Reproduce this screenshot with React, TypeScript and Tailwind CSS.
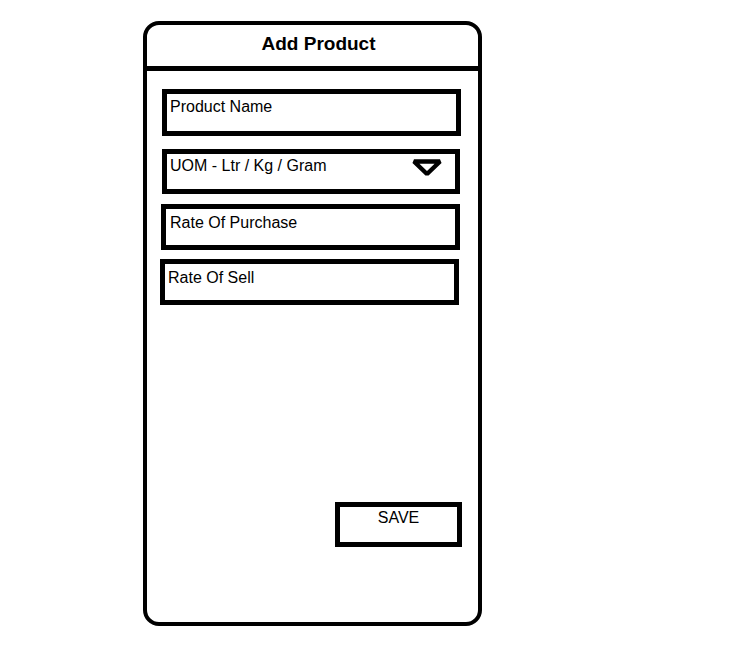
import React from 'react';

const font = { fontFamily: '"Liberation Sans", Arial, sans-serif' };

const Field: React.FC<{ label: string; className: string; children?: React.ReactNode }> = ({ label, className, children }) => {
  return (
    <div className={`flex items-start justify-between border-[5px] border-black bg-white text-[16px] leading-[18px] text-black ${className}`}>
      <span>{label}</span>
      {children}
    </div>
  );
};

const App: React.FC = () => {
  return (
    <div className="min-h-[647px] w-[747px] bg-white" style={font}>
      <div className="pt-[21px] pl-[143px]">
        <div className="flex h-[605px] w-[339px] flex-col rounded-[16px] border-4 border-black">
          <div className="h-[46px] border-b-[5px] border-black pt-[8px] pl-3 text-center text-[19px] font-bold leading-[22px]">
            Add Product
          </div>

          <Field label="Product Name" className="mt-[18px] ml-[15px] h-[47px] w-[299px] pt-[4px] pl-[3px]" />

          <Field label="UOM - Ltr / Kg / Gram" className="mt-[13px] ml-[15px] h-[45px] w-[298px] pt-[3px] pl-[3px] pr-[12px]">
            <svg width="32" height="18" viewBox="0 0 32 18" className="mt-[2px]">
              <polygon points="3,2.5 29,2.5 16,15" fill="none" stroke="black" strokeWidth="4.5" strokeLinejoin="bevel" />
            </svg>
          </Field>

          <Field label="Rate Of Purchase" className="mt-[10px] ml-[14px] h-[46px] w-[299px] pt-[5px] pl-[4px]" />

          <Field label="Rate Of Sell" className="mt-[9px] ml-[13px] h-[46px] w-[299px] pt-[5px] pl-[3px]" />

          <div className="mt-[197px] ml-[188px] h-[45px] w-[127px] border-[5px] border-black pt-[2px] text-center text-[16px] leading-[18px]">
            SAVE
          </div>
        </div>
      </div>
    </div>
  );
};

export default App;
